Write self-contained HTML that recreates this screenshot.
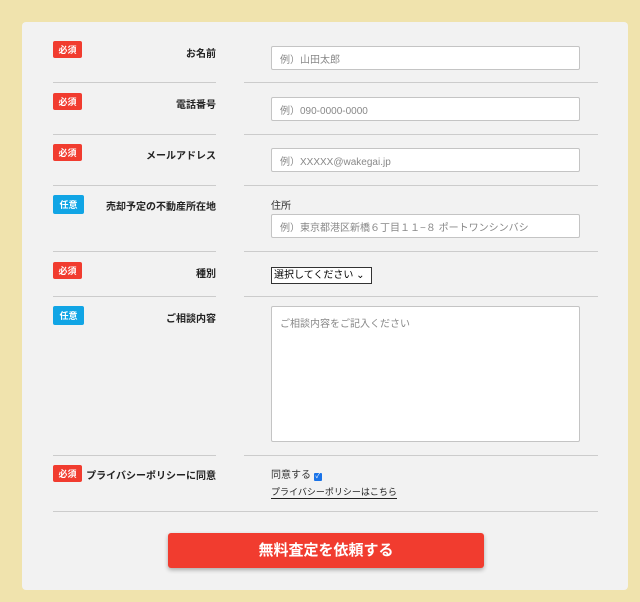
<!DOCTYPE html>
<html><head><meta charset="utf-8"><style>
*{box-sizing:border-box;margin:0;padding:0}
body{width:640px;height:602px;background:#f0e3ad;font-family:"Liberation Sans","Noto Sans CJK JP",sans-serif;position:relative;overflow:hidden}
.card{position:absolute;left:22px;top:22px;width:606px;height:568px;background:#f2f2f2;border-radius:4px}
.a{position:absolute}
.b{position:absolute;left:53px;width:29px;height:17px;border-radius:2px;color:#fff;font-size:9px;font-weight:bold;display:flex;align-items:center;justify-content:center}
.r{background:#f13c2f}.bl{background:#11a5e5;width:31px;height:19px}
.l{position:absolute;right:424px;font-size:10px;font-weight:bold;color:#222;text-align:right;white-space:nowrap}
.in{position:absolute;left:271px;width:309px;height:24px;background:#fff;border:1px solid #c4c4c4;border-radius:2px;font-size:10px;color:#888;padding-left:8px;display:flex;align-items:center}
.hl{position:absolute;left:53px;width:163px;height:1px;background:#ccc}
.hr{position:absolute;left:244px;width:354px;height:1px;background:#ccc}
</style></head><body>
<div class="card"></div>
<div class="b r" style="top:41px">必須</div><div class="l" style="top:45px">お名前</div>
<div class="in" style="top:46px">例）山田太郎</div>
<div class="hl" style="top:82px"></div><div class="hr" style="top:82px"></div>
<div class="b r" style="top:93px">必須</div><div class="l" style="top:96px">電話番号</div>
<div class="in" style="top:97px">例）090-0000-0000</div>
<div class="hl" style="top:134px"></div><div class="hr" style="top:134px"></div>
<div class="b r" style="top:144px">必須</div><div class="l" style="top:147px">メールアドレス</div>
<div class="in" style="top:148px">例）XXXXX@wakegai.jp</div>
<div class="hl" style="top:185px"></div><div class="hr" style="top:185px"></div>
<div class="b bl" style="top:195px">任意</div><div class="l" style="top:198px">売却予定の不動産所在地</div>
<div class="a" style="left:271px;top:197px;font-size:10px;color:#333">住所</div>
<div class="in" style="top:214px">例）東京都港区新橋６丁目１１−８ ポートワンシンバシ</div>
<div class="hl" style="top:251px"></div><div class="hr" style="top:251px"></div>
<div class="b r" style="top:262px">必須</div><div class="l" style="top:265px">種別</div>
<div class="a" style="left:271px;top:267px;width:101px;height:17px;border:1px solid #333;background:#fff;font-size:10px;line-height:15px;padding-left:2px;color:#000">選択してください ⌄</div>
<div class="hl" style="top:296px"></div><div class="hr" style="top:296px"></div>
<div class="b bl" style="top:306px">任意</div><div class="l" style="top:310px">ご相談内容</div>
<div class="in" style="top:306px;height:136px;align-items:flex-start;padding-top:8px">ご相談内容をご記入ください</div>
<div class="hl" style="top:455px"></div><div class="hr" style="top:455px"></div>
<div class="b r" style="top:465px">必須</div><div class="l" style="top:467px">プライバシーポリシーに同意</div>
<div class="a" style="left:271px;top:466px;font-size:10px;color:#333">同意する <span style="display:inline-block;width:8px;height:8px;background:#1a73e8;border-radius:1px;color:#fff;font-size:7px;line-height:8px;text-align:center;vertical-align:0">✓</span></div>
<div class="a" style="left:271px;top:487px;font-size:9px;color:#222;border-bottom:1px solid #222;line-height:11px">プライバシーポリシーはこちら</div>
<div class="a" style="left:53px;top:511px;width:545px;height:1px;background:#ccc"></div>
<div class="a" style="left:168px;top:533px;width:316px;height:35px;background:#f13c2f;border-radius:3px;box-shadow:0 2px 4px rgba(0,0,0,.3);color:#fff;font-size:15px;font-weight:bold;text-align:center;line-height:35px">無料査定を依頼する</div>
</body></html>
